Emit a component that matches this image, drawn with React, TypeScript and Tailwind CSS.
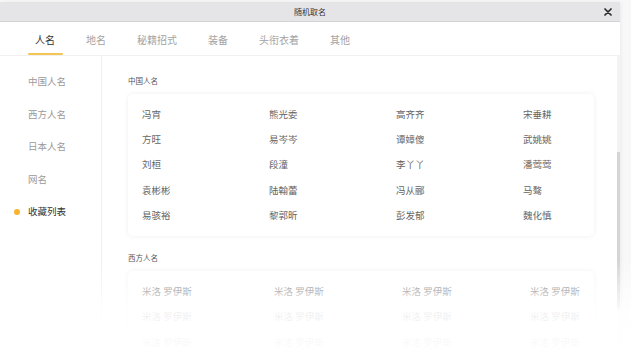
import React from "react";

const FONT = '"Noto Sans CJK SC", "Noto Sans", sans-serif';

const tabs = ["人名", "地名", "秘籍招式", "装备", "头衔衣着", "其他"];
const side = ["中国人名", "西方人名", "日本人名", "网名", "收藏列表"];
const cn = [
  "冯宵", "熊光委", "高齐齐", "宋垂耕",
  "方旺", "易岑岑", "谭嫜傻", "武姚姚",
  "刘桓", "段潼", "李丫丫", "潘莺莺",
  "袁彬彬", "陆翰蕾", "冯从郦", "马骜",
  "易骇裕", "黎郭昕", "彭发郁", "魏化慎",
];
const west = Array.from({ length: 12 }, () => "米洛 罗伊斯");

export default function App() {
  return (
    <div
      className="relative w-[631px] h-[364px] overflow-hidden bg-[#f8f8f8] pt-[2px]"
      style={{ fontFamily: FONT }}
    >
      <div className="relative flex h-[362px] w-[620px] flex-col bg-white shadow-[1px_0_4px_rgba(0,0,0,0.06)]">
        {/* title bar */}
        <div className="relative flex h-[20px] shrink-0 items-center justify-center border-b border-[#d3d3d5] bg-[#e5e5e7]">
          <span className="text-[8px] leading-none text-[#333]">随机取名</span>
          <svg
            className="absolute right-[8px] top-[6px]"
            width="8"
            height="8"
            viewBox="0 0 8 8"
          >
            <path d="M1 1 L7 7 M7 1 L1 7" stroke="#2a2a2a" strokeWidth="1.7" strokeLinecap="round" />
          </svg>
        </div>

        {/* tabs */}
        <div className="flex h-[34px] shrink-0 items-start gap-[31px] border-b border-[#f1f1f1] pl-[35px]">
          {tabs.map((t, i) => (
            <div key={t} className="relative h-full pt-[11px]">
              <span
                className={`block text-[10px] leading-[14px] ${i === 0 ? "text-[#333]" : "text-[#a3a3a3]"}`}
              >
                {t}
              </span>
              {i === 0 && (
                <div className="absolute bottom-[0px] left-[-7px] right-[-8px] h-[2px] rounded-full bg-[#f5c452]" />
              )}
            </div>
          ))}
        </div>

        {/* body */}
        <div className="relative flex flex-1 overflow-hidden">
          <div className="w-[102px] shrink-0 border-r border-[#eeeeee] pt-[10px]">
            {side.map((s, i) => {
              const active = i === side.length - 1;
              return (
                <div key={s} className="flex h-[32.4px] items-center pl-[14px]">
                  <span
                    className={`mr-[8px] h-[6px] w-[6px] rounded-full ${active ? "bg-[#f6b42f]" : "bg-transparent"}`}
                  />
                  <span
                    className={`text-[9.5px] leading-none ${active ? "text-[#333]" : "text-[#9a9a9a]"}`}
                  >
                    {s}
                  </span>
                </div>
              );
            })}
          </div>

          <div className="flex-1 pl-[26px] pr-[25px] pt-[19px]">
            <div className="mb-[8px] h-[11px] text-[7.5px] leading-[11px] text-[#555]">中国人名</div>
            <div className="grid w-[466px] grid-cols-[127px_127px_127px_1fr] auto-rows-[25.3px] rounded-[5px] bg-white px-[14px] py-[8px] shadow-[0_0_5px_rgba(0,0,0,0.07)]">
              {cn.map((n, i) => (
                <div key={i} className="flex items-center text-[9.5px] leading-none text-[#666]">
                  {n}
                </div>
              ))}
            </div>

            <div className="mb-[8px] mt-[16px] h-[11px] text-[7.5px] leading-[11px] text-[#555]">西方人名</div>
            <div className="grid w-[466px] grid-cols-[132px_128px_128px_1fr] auto-rows-[25.8px] rounded-[5px] bg-white px-[14px] py-[7px] shadow-[0_0_5px_rgba(0,0,0,0.07)]">
              {west.map((n, i) => (
                <div key={i} className="flex items-center text-[9.5px] leading-none text-[#666]">
                  {n}
                </div>
              ))}
            </div>
          </div>

          {/* scrollbar */}
          <div className="absolute right-0 top-0 h-full w-[3px] bg-[#f4f4f4]">
            <div className="mt-[96px] h-[156px] w-full bg-[#d5d5d5]" />
          </div>
        </div>
      </div>

      {/* bottom fade */}
      <div className="pointer-events-none absolute bottom-0 left-0 h-[104px] w-full bg-gradient-to-b from-white/0 via-white/90 to-white" />
    </div>
  );
}
